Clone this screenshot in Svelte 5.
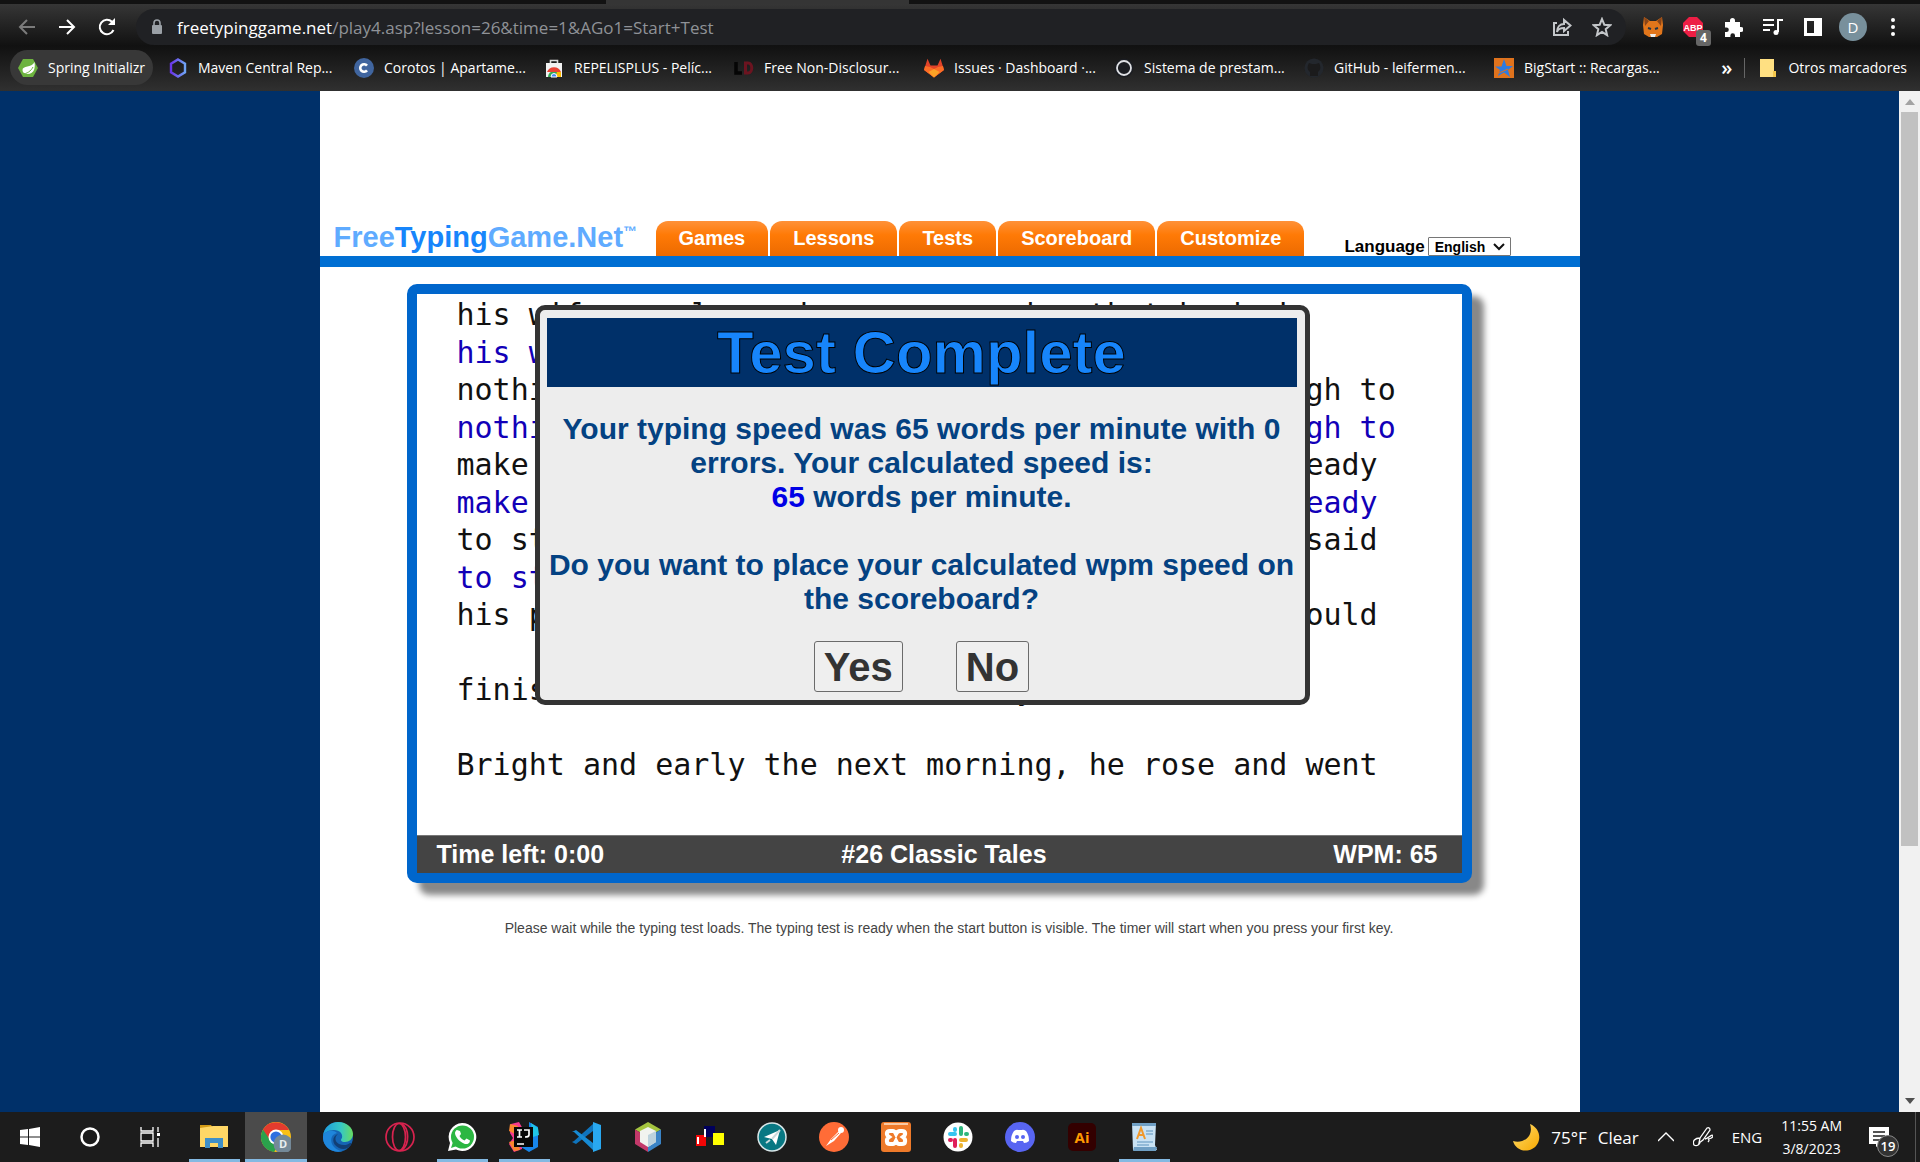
<script>
  const bookmarks = [
    { icon: 'spring', label: 'Spring Initializr', active: true },
    { icon: 'maven', label: 'Maven Central Rep...' },
    { icon: 'corotos', label: 'Corotos | Apartame...' },
    { icon: 'store', label: 'REPELISPLUS - Pelíc...' },
    { icon: 'ld', label: 'Free Non-Disclosur...' },
    { icon: 'gitlab', label: 'Issues · Dashboard ·...' },
    { icon: 'ring', label: 'Sistema de prestam...' },
    { icon: 'github', label: 'GitHub - leifermen...' },
    { icon: 'star', label: 'BigStart :: Recargas...' }
  ];
  const tabs = ['Games', 'Lessons', 'Tests', 'Scoreboard', 'Customize'];
  const passage = [
    { text: 'his wife nearly as bare even under that he had', typed: 'his wife nearly as bare' },
    { text: 'nothing left in all the world, but leather enough to', typed: 'nothing left in all the world, but leather enough to' },
    { text: 'make just one pair of shoes. He cut them out, ready', typed: 'make just one pair of shoes. He cut them out, ready' },
    { text: 'to start on the next day; and at night he then said', typed: 'to start on' },
    { text: 'his prayers, then went to bed, hoping that he could', typed: '' },
    { text: 'finish them as soon as it is day', typed: '' },
    { text: 'Bright and early the next morning, he rose and went', typed: '' }
  ];
  const apps = [
    { id: 'explorer', name: 'File Explorer', open: true },
    { id: 'chrome', name: 'Chrome', open: true, current: true },
    { id: 'edge', name: 'Edge' },
    { id: 'opera', name: 'Opera' },
    { id: 'whatsapp', name: 'WhatsApp', open: true },
    { id: 'intellij', name: 'IntelliJ IDEA', open: true },
    { id: 'vscode', name: 'Visual Studio Code' },
    { id: 'netbeans', name: 'NetBeans' },
    { id: 'blocks', name: 'Blocks' },
    { id: 'plane', name: 'Navigator' },
    { id: 'postman', name: 'Postman' },
    { id: 'xampp', name: 'XAMPP' },
    { id: 'slack', name: 'Slack' },
    { id: 'discord', name: 'Discord' },
    { id: 'ai', name: 'Illustrator' },
    { id: 'wordpad', name: 'WordPad', open: true }
  ];
  let language = $state('English');
  let url = { host: 'freetypinggame.net', path: '/play4.asp?lesson=26&time=1&AGo1=Start+Test' };
</script>

{#snippet bookmarkIcon(id)}
  <svg class="fav" viewBox="0 0 20 20" aria-hidden="true">
    {#if id === 'spring'}
      <path d="M5 1h10l5 9-5 9H5l-5-9z" fill="#6db33f" />
      <path d="M16.500 4c.8 5 .3 12-7 12-3 0-5-1.500-5-4 0-4.500 9-2 12-8z" fill="#fff" />
      <path d="M4 16c5 0 9-3 11-7" stroke="#6db33f" fill="none" />
    {:else if id === 'maven'}
      <defs><linearGradient id="mv" x2="1"><stop stop-color="#6a35e8" /><stop offset="1" stop-color="#6fa3f5" /></linearGradient></defs>
      <path d="M10 1.500l7 4.200v8.600l-7 4.200-7-4.200V5.700z" fill="none" stroke="url(#mv)" stroke-width="2.400" />
    {:else if id === 'corotos'}
      <circle cx="10" cy="10" r="10" fill="#40659f" />
      <path d="M13 7.600a3.800 3.800 0 1 0 0 4.800" fill="none" stroke="#fff" stroke-width="2.600" />
    {:else if id === 'store'}
      <path d="M6.500 5V2.500h7V5" fill="none" stroke="#ddd" stroke-width="1.600" />
      <path d="M2 5h16v14H2z" fill="#f2f2f2" />
      <path d="M4 19a6 6 0 0 1 12 0z" fill="#34a853" />
      <path d="M3 14a7.500 7.500 0 0 1 14 0z" fill="#ea4335" />
      <path d="M11 19l2-5h4v5z" fill="#fbbc04" />
      <path d="M7 19a3 3.500 0 0 1 6 0z" fill="#4285f4" stroke="#fff" />
    {:else if id === 'ld'}
      <path d="M2 4v11h6" fill="none" stroke="#050505" stroke-width="3.500" />
      <path d="M11.500 5h2.500c5 0 5 10 0 10h-2.500z" fill="none" stroke="#6c1420" stroke-width="3" />
    {:else if id === 'gitlab'}
      <path d="M10 19.500L0 12 3.500 0.800 6.500 7.500h7l3-6.700L20 12z" fill="#e24329" />
      <path d="M10 19.500L0 12l1-4 5 1 4 2 4-2 5-1 1 4z" fill="#fc6d26" />
      <path d="M10 19.500L4.500 14 10 11l5.500 3z" fill="#fca326" />
    {:else if id === 'ring'}
      <circle cx="10" cy="10" r="9.500" fill="#1b1d22" />
      <circle cx="10" cy="10" r="7" fill="none" stroke="#dfe1e5" stroke-width="1.800" />
    {:else if id === 'github'}
      <circle cx="10" cy="10" r="9.500" fill="#23272d" />
      <path d="M6 18v-4c-4-3-2-7-1-9l3 1h4l3-1c1 2 3 6-1 9v4z" fill="#1b1b1c" />
    {:else}
      <path d="M0 0h20v20H0z" fill="#e0731d" />
      <path d="M10 1l2.500 7H19l-5 4 2 7-6-4.500L4 18l2-6-5-3.500h6.500z" fill="#2e7be0" />
      <path d="M5 15l9-4" stroke="#e0731d" />
    {/if}
  </svg>
{/snippet}

{#snippet appIcon(id)}
  <svg class="app-icon" viewBox="0 0 30 30" aria-hidden="true">
    {#if id === 'explorer'}
      <path d="M1 3h11l2 3v4H1z" fill="#d39b17" />
      <path d="M1 6l13-2h15v21H1z" fill="#ffd766" />
      <path d="M6 26V16h18v10h-5v-5h-8v5z" fill="#3f8fc8" />
    {:else if id === 'chrome'}
      <circle cx="15" cy="15" r="15" fill="#fbc116" />
      <path d="M15 15L2 7.500A15 15 0 0 0 13 30l8-12z" fill="#2aa24c" />
      <path d="M15 8h13A15 15 0 0 0 2 7.500L9 18z" fill="#e33b2e" />
      <circle cx="15" cy="15" r="7.500" fill="#fff" />
      <circle cx="15" cy="15" r="5.600" fill="#2d6fe0" />
      <circle cx="22" cy="22" r="9.500" fill="#748998" />
      <text x="22" y="26" text-anchor="middle" class="chrome-letter">D</text>
    {:else if id === 'edge'}
      <defs><linearGradient id="eg" x2="1"><stop stop-color="#1d9ae0" /><stop offset=".6" stop-color="#36c8c4" /><stop offset="1" stop-color="#68dc60" /></linearGradient></defs>
      <circle cx="15" cy="15" r="15" fill="#1565b5" />
      <path d="M0 14C1 5 8 0 15 0c9 0 15 6 15 12 0 5-4 8-8 8-4 0-5-2-3-4 1-4-2-8-8-8C5 8 1 11 0 14z" fill="url(#eg)" />
      <path d="M0 14c2-5 10-7 14-3-5 1-7 6-5 11 2 4 6 7 11 7C10 32-1 25 0 14z" fill="#1f86dc" />
      <path d="M15 12c-4 3-3 8 1 10 4 2 9 1 11-1 1 0 2 0 1 2-3 4-8 5-12 3-8-4-7-12-1-14z" fill="#123f75" />
    {:else if id === 'opera'}
      <g fill="none" stroke="#d8234f" stroke-width="1.700"><circle cx="15" cy="15" r="14" /><ellipse cx="14" cy="15" rx="6.500" ry="13.500" /><path d="M17 2c7 4 8 20 0 26" /></g>
    {:else if id === 'whatsapp'}
      <path d="M15 1a14 14 0 1 1-6 26.500L1 29l2-8A14 14 0 0 1 15 1z" fill="#fff" />
      <circle cx="15.500" cy="15" r="11.500" fill="#2cb742" />
      <path d="M4 26l2-6 4 4z" fill="#2cb742" />
      <path d="M10 8l3 1 1 3-1.500 2c1 2 3 3.500 5 4.500l2-2 3.500 2c0 3-3 4-5 3.500C12 20 8 14 8 11c0-1 1-3 2-3z" fill="#fff" />
    {:else if id === 'intellij'}
      <path d="M2 2l8-2 5 9-2 18-8 3-5-8 4-6-3-5z" fill="#f8398e" />
      <path d="M1 2l8 2-1 9-8-4zM0 20l8-2 3 10-6 1z" fill="#fb872e" />
      <path d="M20 0l9 5v20l-9 5-8-5 8-7z" fill="#1786eb" />
      <path d="M22 1l7 5 1 7-6 2z" fill="#20c6e8" />
      <path d="M5 5h19v20H5z" fill="#080808" />
      <path d="M8 8h5M10.500 8v7M8 15h5M15 8h5v5q0 2-4 2" fill="none" stroke="#fff" stroke-width="1.700" />
      <path d="M8 22h7" stroke="#fff" stroke-width="1.500" />
    {:else if id === 'vscode'}
      <path d="M3 19l19-17v7L5 22l-4-2z" fill="#0f74bd" />
      <path d="M3 10l19 18v-7L5 8l-4 2z" fill="#178bd4" />
      <path d="M22 0l8 3v24l-8 3z" fill="#29a8f0" />
    {:else if id === 'netbeans'}
      <path d="M15 0l13 7.500L15 15 2 7.500z" fill="#a4c43f" />
      <path d="M2 7.500L15 15v15L2 22z" fill="#c3396a" />
      <path d="M28 7.500L15 15v15l13-8z" fill="#3a84c6" />
      <path d="M15 5l8 4v11l-8 5-8-5V9z" fill="#f1f3ef" />
      <path d="M15 13l8-4v11l-8 5z" fill="#bcd2dd" />
    {:else if id === 'blocks'}
      <path d="M9 4h11v11H9z" fill="#00005c" /><path d="M1 13h10v11H1z" fill="#f20606" /><path d="M18 11h11v12H18z" fill="#ff0" />
      <path d="M10 7v8M3 15v7" stroke="#fff" stroke-width="2" />
    {:else if id === 'plane'}
      <circle cx="15" cy="15" r="14" fill="#087883" stroke="#d8e6e8" stroke-width="1.500" />
      <path d="M23 8l-4 15-4-6-8-2z" fill="#fff" /><path d="M15 17l8-9M9 21l4-3" stroke="#cad9dc" stroke-width="2" />
    {:else if id === 'postman'}
      <circle cx="15" cy="15" r="15" fill="#ff6c37" />
      <circle cx="22" cy="8" r="3" fill="#fff" /><path d="M20 9l-8 8-5 7 8-5 7-8z" fill="#fff" /><path d="M12 18l8-7" stroke="#ff6c37" />
    {:else if id === 'xampp'}
      <rect width="30" height="30" rx="3" fill="#ee7a2a" /><path d="M3 2h24" stroke="#f9c9a3" stroke-width="2" />
      <path d="M9 9h3c1 0 2 1 3 3 1-2 2-3 4-3h2c4 0 4 4 1 6 3 2 3 7-1 7h-3c-1 0-2-1-3-3-1 2-2 3-3 3H9c-4 0-4-5-1-7-3-2-3-6 1-6z" fill="none" stroke="#fff" stroke-width="4" />
    {:else if id === 'slack'}
      <circle cx="15" cy="15" r="14.500" fill="#fff" />
      <g stroke-width="4" stroke-linecap="round"><path d="M7 12h5M12 7v1" stroke="#36c5f0" /><path d="M18 6v6M23 12h1" stroke="#2eb67d" /><path d="M12 18v6M7 18h1" stroke="#e01e5a" /><path d="M18 18h5M18 23v1" stroke="#ecb22e" /></g>
    {:else if id === 'discord'}
      <circle cx="15" cy="15" r="15" fill="#5865f2" />
      <path d="M9 9q3-2 4-1h4q1-1 4 1 3 4 3 10-2 2-5 2l-1-2h-6l-1 2q-3 0-5-2 0-6 3-10z" fill="#fff" />
      <circle cx="12" cy="15" r="2" fill="#5865f2" /><circle cx="18" cy="15" r="2" fill="#5865f2" />
    {:else if id === 'ai'}
      <rect x="1" y="1" width="28" height="28" rx="5" fill="#330000" />
      <text x="15" y="21" text-anchor="middle" class="ai-letters">Ai</text>
    {:else}
      <path d="M3 1h24l-1 22 2 5H4z" fill="#c9e2f4" /><path d="M3 1h24v3H3zM5 25h23l-1 4H4z" fill="#6f9fc4" />
      <path d="M8 17l4-11 4 11M10 13h4" fill="none" stroke="#f0982c" stroke-width="2" />
      <path d="M17 9h7M17 12h7M8 20h16M8 23h12" stroke="#5c93bd" />
    {/if}
  </svg>
{/snippet}

<div class="desktop">
  <header class="chrome">
    <div class="tabstrip"><span class="current-tab"></span></div>
    <div class="toolbar">
      <nav class="history" aria-label="History">
        <button class="dim" aria-label="Back"><svg viewBox="0 0 20 20"><path d="M18 10H3M10 3l-7 7 7 7" /></svg></button>
        <button aria-label="Forward"><svg viewBox="0 0 20 20"><path d="M2 10h15M10 3l7 7-7 7" /></svg></button>
        <button aria-label="Reload"><svg viewBox="0 0 20 20"><path d="M16.500 13A7.200 7.200 0 1 1 15 4.800L17 7" /><path d="M18 1v7h-7z" fill="#fff" stroke="none" /></svg></button>
      </nav>
      <div class="omnibox">
        <svg class="lock" viewBox="0 0 12 16"><path d="M3 7V4a3 3 0 0 1 6 0v3" fill="none" stroke="#9aa0a6" stroke-width="1.600" /><rect x="1" y="6" width="10" height="9" rx="1" fill="#9aa0a6" /></svg>
        <a class="address" href="#top"><b>{url.host}</b>{url.path}</a>
        <button aria-label="Share"><svg viewBox="0 0 20 20"><path d="M5 6H2v12h14v-4" /><path d="M12 7V3l6.500 5.500L12 14v-3c-4 0-6 1-7 4 0-5 3-8 7-8z" /></svg></button>
        <button aria-label="Bookmark"><svg viewBox="0 0 20 20"><path d="M10 2l2.300 5.700 6 .5-4.600 4 1.400 6L10 15l-5.100 3.200 1.400-6-4.600-4 6-.5z" /></svg></button>
      </div>
      <div class="extensions">
        <button aria-label="MetaMask"><svg viewBox="0 0 20 20"><path d="M1 0l6 4h6l6-4 1 8-1 9-5 3H6l-5-3L0 8z" fill="#e2761b" stroke="none" /><path d="M1 0l5 4-4 5zM19 0l-5 4 4 5z" fill="#8a4518" stroke="none" /><path d="M7 17h6l-1 3H8z" fill="#eee" stroke="none" /><path d="M5 11l3 1M15 11l-3 1" stroke="#233447" /></svg></button>
        <button class="abp" aria-label="Adblock Plus"><svg viewBox="0 0 20 20"><path d="M6 0h8l6 6v8l-6 6H6l-6-6V6z" fill="#ed1e45" stroke="none" /><text x="10" y="14" text-anchor="middle" class="abp-letters">ABP</text></svg><span class="count">4</span></button>
        <button aria-label="Extensions"><svg viewBox="0 0 20 20"><path d="M2 5h5V3.500a2.500 2.500 0 0 1 5 0V5h5v5h1a2.500 2.500 0 0 1 0 5h-1v5h-5v-1.500a2.300 2.300 0 0 0-4.600 0V20H2v-5h1.500a2.300 2.300 0 0 0 0-4.600H2z" fill="#fff" stroke="none" /></svg></button>
        <button aria-label="Media"><svg viewBox="0 0 20 20"><path d="M0 3h11M0 8h11M0 13h7M15 15V3h5" /><circle cx="13" cy="15.500" r="2.500" fill="#fff" stroke="none" /></svg></button>
        <button aria-label="Side panel"><svg viewBox="0 0 20 20"><path d="M1 1h18v18H1zM4 4v12h7V4z" fill="#fff" fill-rule="evenodd" stroke="none" /></svg></button>
        <button class="avatar" aria-label="Profile">D</button>
        <button aria-label="Menu"><svg viewBox="0 0 20 20"><g fill="#fff" stroke="none"><circle cx="10" cy="3" r="2" /><circle cx="10" cy="10" r="2" /><circle cx="10" cy="17" r="2" /></g></svg></button>
      </div>
    </div>
    <nav class="bookmarks" aria-label="Bookmarks">
      <div class="marks">
        {#each bookmarks as mark}
          <a href="#top" class:active={mark.active}>{@render bookmarkIcon(mark.icon)}<span>{mark.label}</span></a>
        {/each}
      </div>
      <button class="more" aria-label="More bookmarks">»</button>
      <a class="other" href="#top"><svg viewBox="0 0 16 20"><path d="M0 1h14v12l2 1v5H0z" fill="#ffe082" /><path d="M13 13h3v6h-3z" fill="#f5c84c" /></svg>Otros marcadores</a>
    </nav>
  </header>

  <div class="viewport">
    <div class="site" id="top">
      <div class="page">
        <header class="masthead">
          <h1 class="logo">Free<b>Typing</b>Game.Net<sup>™</sup></h1>
          <nav class="tabs" aria-label="Site">
            {#each tabs as tab}<a href="#top">{tab}</a>{/each}
          </nav>
          <label class="language">Language
            <span class="picker">
              <select bind:value={language}><option>English</option><option>Español</option></select>
              <svg viewBox="0 0 12 8"><path d="M1 1l5 5 5-5" fill="none" stroke="#111" stroke-width="2" /></svg>
            </span>
          </label>
        </header>

        <main>
          <section class="game">
            <div class="passage">
              {#each passage as line}
                <div class="line">
                  <span>{line.text}</span>
                  {#if line.typed}<span class="typed">{line.typed}</span>{/if}
                </div>
              {/each}
            </div>
            <footer class="status"><span>Time left: 0:00</span><span>#26 Classic Tales</span><span class="wpm">WPM: 65</span></footer>
            <div class="dialog" role="dialog" aria-labelledby="done">
              <h2 id="done">Test Complete</h2>
              <p>Your typing speed was 65 words per minute with 0 errors. Your calculated speed is:<br /><b>65</b> words per minute.</p>
              <p>Do you want to place your calculated wpm speed on the scoreboard?</p>
              <div class="answers"><button>Yes</button><button>No</button></div>
            </div>
          </section>
          <p class="note">Please wait while the typing test loads. The typing test is ready when the start button is visible. The timer will start when you press your first key.</p>
        </main>
      </div>
    </div>
    <div class="scrollbar" aria-hidden="true">
      <svg viewBox="0 0 12 7"><path d="M0 7l6-7 6 7z" fill="#a3a3a3" /></svg>
      <div class="track"><div class="thumb"></div></div>
      <svg viewBox="0 0 12 7"><path d="M0 0h12L6 7z" fill="#505050" /></svg>
    </div>
  </div>

  <footer class="taskbar">
    <div class="system">
      <button aria-label="Start"><svg viewBox="0 0 20 20"><path d="M0 3l8-1v7.500H0zM9 2l11-2v9.500H9zM0 10.500h8V18l-8-1zM9 10.500h11V20L9 18z" fill="#fff" /></svg></button>
      <button aria-label="Search"><svg viewBox="0 0 20 20"><circle cx="10" cy="10" r="8.500" fill="none" stroke="#fff" stroke-width="2.500" /></svg></button>
      <button aria-label="Task view"><svg viewBox="0 0 20 20"><path d="M1 0v4h12V0M1 6h12v8H1zM1 20v-4h12v4M18 0v5M18 11v9" fill="none" stroke="#fff" stroke-width="1.300" /><path d="M17 6h3v3h-3z" fill="#fff" /></svg></button>
    </div>
    <div class="apps">
      {#each apps as app}
        <button aria-label={app.name} class:open={app.open} class:current={app.current}>{@render appIcon(app.id)}</button>
      {/each}
    </div>
    <div class="tray">
      <button class="weather"><svg viewBox="0 0 28 28"><defs><linearGradient id="mn" x2="1" y2="1"><stop stop-color="#ffdf70" /><stop offset="1" stop-color="#f7a800" /></linearGradient></defs><path d="M18 1c12 5 12 20 2 25C12 30 3 26 1 18c11 3 21-5 17-17z" fill="url(#mn)" /></svg><span>75°F</span><span>Clear</span></button>
      <button aria-label="Hidden icons"><svg class="small" viewBox="0 0 16 16"><path d="M0 12l8-8 8 8" /></svg></button>
      <button aria-label="Pen"><svg class="pen" viewBox="0 0 20 20"><path d="M6 16l1-5 7-10q3-1 3 2l-7 10zM7 11c-5 0-8 3-6 7 3 2 6-1 6-3M12 12c3 0 7-6 8-3 0 2-4 3-5 3q2 1 0 3" /></svg></button>
      <button>ENG</button>
      <button class="clock"><span>11:55 AM</span><span>3/8/2023</span></button>
      <button class="notices" aria-label="Notifications"><svg viewBox="0 0 20 20"><path d="M0 0h20v17h-9l-4 3v-3H0z" fill="#fff" /><path d="M4 5h12M4 9h12M4 13h8" stroke="#1c1c1c" stroke-width="1.500" /></svg><span class="badge">19</span></button>
      <span class="peek"></span>
    </div>
  </footer>
</div>

<style>
  :global(body) { margin: 0; }
  .desktop { min-height: 100vh; display: flex; flex-direction: column; font-family: "Segoe UI", "Open Sans", sans-serif; color: #fff; }
  .desktop :global(*) { box-sizing: border-box; }
  button { font: inherit; color: inherit; background: none; border: 0; padding: 0; }
  a { color: inherit; text-decoration: none; }
  svg { display: block; flex: none; }

  .chrome { height: 91px; background: linear-gradient(#363636 4px, #111 46px, #303030 91px); font-size: 14px; }
  .tabstrip { height: 4px; background: #121212; display: flex; }
  .current-tab { margin-left: 606px; width: 303px; background: #353535; }
  .toolbar { height: 46px; display: flex; align-items: center; padding: 0 17px; }
  .history { display: flex; gap: 20px; width: 119px; }
  .toolbar button svg { width: 20px; height: 20px; fill: none; stroke: #fff; stroke-width: 2; }
  .toolbar .dim svg { stroke: #7b7b7b; }
  .omnibox { flex: 1; height: 36px; border-radius: 18px; background: #202124; display: flex; align-items: center; padding: 0 14px 0 15px; gap: 20px; }
  .lock { width: 12px; height: 16px; }
  .address { flex: 1; font-size: 17px; color: #8f9297; margin-left: -6px; white-space: nowrap; }
  .address b { font-weight: 400; color: #fff; }
  .toolbar .omnibox button svg { stroke: #c4c7ca; stroke-width: 2; }
  .extensions { display: flex; align-items: center; gap: 20px; margin-left: 17px; }
  .abp { position: relative; }
  .abp-letters { font: bold 9px "Liberation Sans", sans-serif; fill: #fff; stroke: none; }
  .count { position: absolute; left: 13px; top: 13px; width: 15px; height: 16px; border-radius: 3px; background: #666; font: bold 12px/16px "Open Sans", sans-serif; }
  .toolbar .avatar { width: 28px; height: 28px; margin: 0 -4px; border-radius: 50%; background: #78909c; font-size: 15px; }

  .bookmarks { height: 35px; display: flex; align-items: center; padding: 0 13px 0 10px; line-height: 18px; }
  .marks { flex: 1; display: grid; grid-template-columns: 150px 186px repeat(7, 190px); }
  .marks a { display: flex; align-items: center; gap: 10px; height: 35px; padding: 0 8px; white-space: nowrap; justify-self: start; border-radius: 18px; }
  .marks .active { background: #383838; }
  .fav { width: 20px; height: 20px; }
  .more { font-size: 20px; font-weight: 600; padding-right: 12px; border-right: 1px solid #666; line-height: 20px; }
  .other { display: flex; align-items: center; gap: 12px; margin-left: 15px; white-space: nowrap; }
  .other svg { width: 16px; height: 20px; }

  .viewport { flex: 1; display: flex; background: #003069; }
  .site { flex: 1; color: #000; font-family: Arial, "Liberation Sans", sans-serif; display: flex; justify-content: center; }
  .page { width: 1260px; background: #fff; padding-top: 130px; }
  .masthead { display: flex; align-items: flex-end; height: 46px; padding-left: 14px; border-bottom: 11px solid #006fd3; }
  .logo { width: 322px; margin: 0; font: bold 29px/38px "Liberation Sans", sans-serif; color: #5fabff; white-space: nowrap; }
  .logo b { color: #1785fb; }
  .logo sup { font-size: 14px; line-height: 14px; vertical-align: 11px; }
  .tabs { display: flex; gap: 2px; }
  .tabs a { height: 35px; padding: 0 23px; border-radius: 12px 12px 0 0; background: linear-gradient(#ff9138, #ff7a06 40%, #ec6a00); color: #fff; font: bold 20px/34px "Liberation Sans", sans-serif; }
  .language { display: flex; align-items: center; gap: 3px; margin-left: 40px; font-size: 17px; font-weight: 700; line-height: 19px; }
  .picker { display: grid; align-items: center; }
  .picker select { grid-area: 1 / 1; appearance: none; width: 83px; height: 19px; padding: 0 6px; border: 1px solid #767676; border-radius: 1px; background: #fff; color: #000; font: bold 14px "Liberation Sans", sans-serif; }
  .picker svg { grid-area: 1 / 1; justify-self: end; width: 12px; height: 8px; margin-right: 6px; pointer-events: none; }

  main { padding: 17px 108px 0 87px; }
  .game { position: relative; height: 599px; display: flex; flex-direction: column; border: 10px solid #0066cc; border-radius: 10px; background: #fff; box-shadow: 12px 12px 6px #888; }
  .passage { flex: 1; padding: 2px 40px 0; font: 30px "DejaVu Sans Mono", monospace; color: #111; white-space: pre; }
  .line { height: 75px; display: flex; flex-direction: column; }
  .line span { flex: 0 0 50%; line-height: 37px; }
  .line .typed { color: #1200b8; }
  .status { height: 38px; display: grid; grid-template-columns: 29fr auto 28fr; align-items: center; padding: 0 24px 0 20px; background: #444; border-top: 1px solid #777; color: #fff; font-size: 25px; font-weight: 700; }
  .wpm { text-align: right; }

  .dialog { position: absolute; left: 118px; top: 11px; width: 775px; height: 400px; padding: 8px 8px 0 7px; border: 5px solid #333; border-radius: 10px; background: #ededed; color: #044282; text-align: center; }
  h2 { margin: 0 0 25px; background: #003069; color: #1785fb; font-size: 60px; line-height: 69px; -webkit-text-stroke: 1px #000; }
  .dialog p { margin: 0 0 34px; font-size: 30px; line-height: 34px; font-weight: 700; }
  .dialog p b { color: #0000e6; }
  .answers { display: flex; justify-content: center; gap: 53px; margin-top: -9px; }
  .answers button { height: 51px; padding: 0 9px; border: 1px solid #6b6b6b; border-radius: 3px; background: #efefef; color: #333; font-size: 40px; font-weight: 700; line-height: 46px; }
  .note { margin: 35px 0 0 20px; text-align: center; font-size: 14px; line-height: 20px; color: #444; }

  .scrollbar { width: 21px; background: #f1f1f1; display: flex; flex-direction: column; align-items: center; padding: 8px 0; }
  .scrollbar svg { width: 10px; height: 6px; }
  .track { flex: 1; width: 17px; padding: 7px 0; }
  .thumb { height: 75%; background: #c1c1c1; }

  .taskbar { height: 50px; background: #1c1c1c; display: flex; }
  .system { display: flex; width: 183px; }
  .system button { width: 60px; display: grid; place-items: center; }
  .system svg { width: 20px; height: 20px; }
  .apps { display: flex; flex: 1; }
  .apps button { width: 62px; display: flex; flex-direction: column; align-items: center; padding-top: 10px; }
  .app-icon { width: 30px; height: 30px; }
  .apps .open::after { content: ""; width: 51px; height: 3px; margin-top: 7px; background: #84b9e2; }
  .apps .current { background: #4b4b4b; }
  .apps .current::after { width: 100%; }
  .chrome-letter { font: bold 11px "Open Sans", sans-serif; fill: #e8edf0; }
  .ai-letters { font: bold 15px "Open Sans", sans-serif; fill: #ff9a00; }
  .tray { display: flex; align-items: center; gap: 19px; padding-right: 4px; font-size: 15px; }
  .weather { display: flex; align-items: center; gap: 11px; font-size: 17px; }
  .weather svg { width: 28px; height: 28px; }
  .small { width: 16px; height: 16px; }
  .pen { width: 20px; height: 20px; }
  .small, .pen { fill: none; stroke: #fff; stroke-width: 1.300; }
  .clock { display: flex; flex-direction: column; align-items: center; font-size: 14px; line-height: 23px; }
  .notices { position: relative; margin-left: 8px; }
  .notices svg { width: 20px; height: 20px; }
  .badge { position: absolute; left: 8px; top: 8px; width: 22px; height: 22px; border: 1px solid #888; border-radius: 50%; background: #333; font-size: 13px; line-height: 20px; font-weight: 600; }
  .peek { align-self: stretch; margin-left: 7px; border-left: 1px solid #555; }
</style>
